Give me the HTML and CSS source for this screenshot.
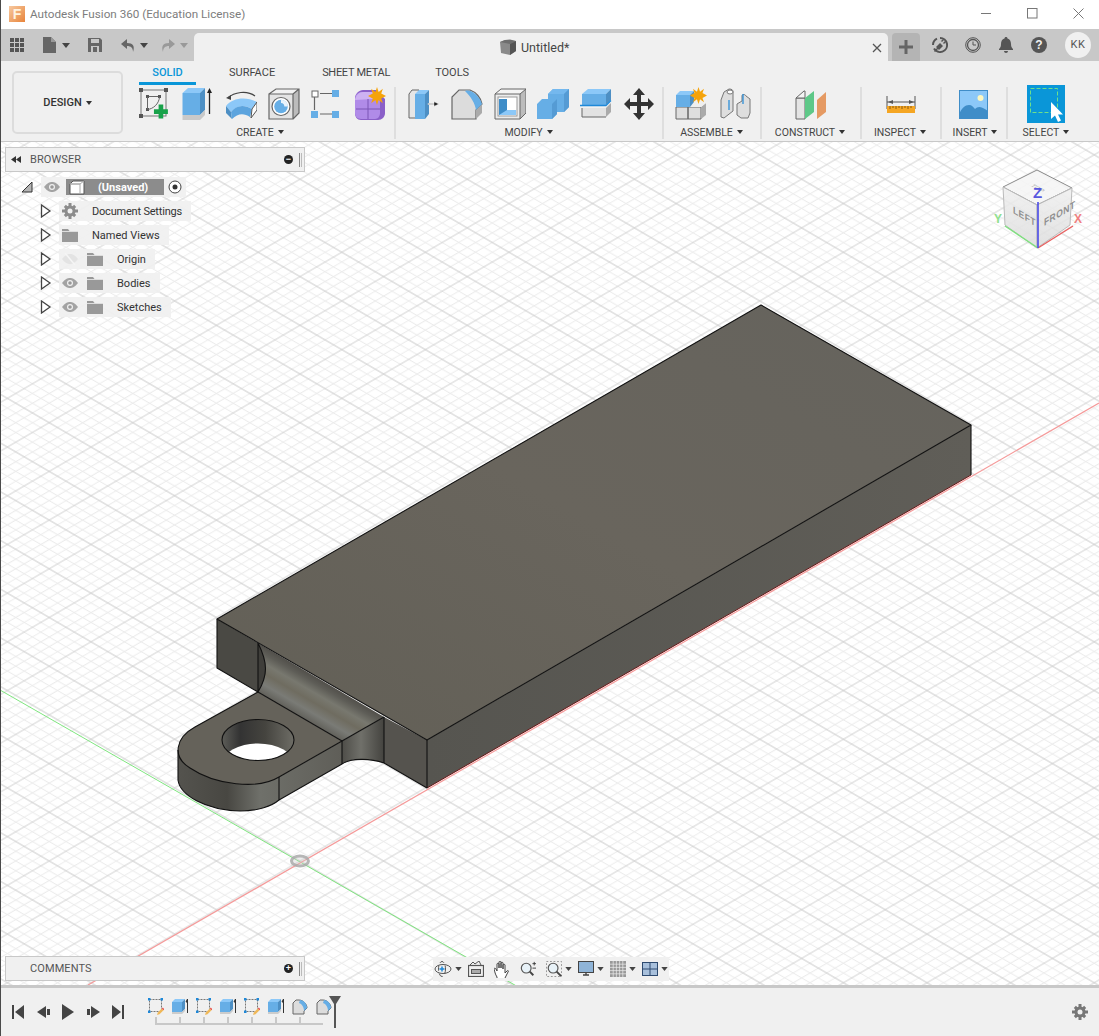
FILE: index.html
```html
<!DOCTYPE html>
<html lang="en">
<head>
<meta charset="utf-8">
<title>Autodesk Fusion 360</title>
<link rel="stylesheet" href="styles.css">
</head>
<body>
<svg class="defs" width="0" height="0" aria-hidden="true">
  <defs>
    <symbol id="i-folder" viewBox="0 0 16 14"><path d="M0 1h6l1.500 2H16v11H0z" fill="#999"/><path d="M0 3.500h16" stroke="#f0f0f0" stroke-width=".8"/></symbol>
    <symbol id="i-eye" viewBox="0 0 16 10"><path d="M0 5C3 1 5.500 0 8 0s5 1 8 5c-3 4-5.500 5-8 5S3 9 0 5z" fill="#a3a3a3"/><circle cx="8" cy="5" r="3" fill="#f0f0f0"/><circle cx="8" cy="5" r="1.800" fill="#999"/></symbol>
    <symbol id="i-arrow" viewBox="0 0 12 14"><path d="M1.500 1 10 7l-8.500 6z" fill="#fff" stroke="#444" stroke-width="1.300"/></symbol>
    <symbol id="t-sketch" viewBox="0 0 16 18"><rect x="1.500" y="1.500" width="12" height="12" fill="none" stroke="#777" stroke-dasharray="2 1"/><g fill="#1e88d8"><rect x="0" y="0" width="2.500" height="2.500"/><rect x="12.500" y="0" width="2.500" height="2.500"/><rect x="0" y="12.500" width="2.500" height="2.500"/></g><path d="M9 17l.8-2.500 4-4 1.700 1.700-4 4z" fill="#f0b858"/><path d="M13.800 10.500l1-1 1.700 1.700-1 1z" fill="#e85050"/></symbol>
    <symbol id="t-extrude" viewBox="0 0 16 18"><path d="M0 4h10v10H0z" fill="#66aee6"/><path d="M0 4l3-3h10l-3 3z" fill="#8cc8f8"/><path d="M10 4l3-3v10l-3 3z" fill="#4d8fc4"/><path d="M0 14h10l3-3v2l-3 3H0z" fill="#ccc"/><path d="M15.500 1v14M14 4l1.500-3L17 4z" stroke="#333" fill="#333"/></symbol>
    <symbol id="t-fillet" viewBox="0 0 16 18"><path d="M1 16V5l3-3h3c4 0 8 4 8 8l-3 3v3z" fill="#dcdcdc" stroke="#666"/><path d="M8 2c4 0 7 4 7 8l-3 3c0-4-2-7-5-8z" fill="#66aee6"/></symbol>
    <symbol id="i-star" viewBox="0 0 20 20"><path d="M10 0l1.800 5.500L16.500 2l-1.800 5.200L20 10l-5.300 2.800 1.800 5.200-4.700-3.500L10 20l-1.800-5.500L3.500 18l1.800-5.200L0 10l5.300-2.800L3.500 2l4.700 3.500z" fill="#f5a30a"/></symbol>
    <symbol id="i-caret" viewBox="0 0 8 5"><path d="M0 0h8L4 5z" fill="#444"/></symbol>
    <pattern id="grid" width="100" height="100" patternUnits="userSpaceOnUse" patternTransform="matrix(.418 -.2435 .418 .2435 300 861)">
      <path d="M20 0V100M40 0V100M60 0V100M80 0V100M0 20H100M0 40H100M0 60H100M0 80H100" stroke="#ececec" stroke-width="2.300" fill="none"/>
      <path d="M0 0V100M100 0V100M0 0H100M0 100H100" stroke="#cfcfcf" stroke-width="2.400" fill="none"/>
    </pattern>
    <linearGradient id="g-top" x1="0" y1="1" x2="1" y2="0"><stop offset="0" stop-color="#625f56"/><stop offset=".5" stop-color="#69655d"/><stop offset="1" stop-color="#65635d"/></linearGradient>
    <linearGradient id="g-side" x1="0" y1="0" x2="1" y2="0"><stop offset="0" stop-color="#565550"/><stop offset="1" stop-color="#605e58"/></linearGradient>
    <linearGradient id="g-fillet" gradientUnits="userSpaceOnUse" x1="300" y1="668" x2="279" y2="704"><stop offset="0" stop-color="#52504b"/><stop offset=".14" stop-color="#5e5d57"/><stop offset=".34" stop-color="#78786f"/><stop offset=".55" stop-color="#6f6c60"/><stop offset=".78" stop-color="#7a7b76"/><stop offset="1" stop-color="#62615b"/></linearGradient>
    <linearGradient id="g-tabside" x1="0" y1="0" x2="1" y2="0"><stop offset="0" stop-color="#54534e"/><stop offset=".3" stop-color="#484742"/><stop offset=".5" stop-color="#6f706a"/><stop offset="1" stop-color="#5f5e58"/></linearGradient>
    <linearGradient id="g-notch" x1="0" y1="0" x2="1" y2="0"><stop offset="0" stop-color="#4e4d48"/><stop offset=".45" stop-color="#70706a"/><stop offset="1" stop-color="#44433f"/></linearGradient>
    <linearGradient id="g-hole" x1="0" y1="0" x2="1" y2="0"><stop offset="0" stop-color="#5d5d58"/><stop offset=".25" stop-color="#333"/><stop offset=".6" stop-color="#45443f"/><stop offset="1" stop-color="#6e6d66"/></linearGradient>
    <linearGradient id="g-cube" x1="0" y1="0" x2="0" y2="1"><stop offset="0" stop-color="#efefef" stop-opacity=".85"/><stop offset="1" stop-color="#dcdcdc" stop-opacity=".85"/></linearGradient>
    <clipPath id="hole-clip"><ellipse cx="258" cy="740" rx="36" ry="20.500"/></clipPath>
  </defs>
</svg>

<div class="app">
  <header class="titlebar">
    <span class="logo"><span class="logo-f">F</span></span>
    <span class="title">Autodesk Fusion 360 (Education License)</span>
    <div class="winctl">
      <svg width="11" height="11" viewBox="0 0 11 11"><path d="M0 5.500h10" stroke="#777"/></svg>
      <svg width="11" height="11" viewBox="0 0 11 11"><rect x=".5" y=".5" width="9.500" height="9.500" fill="none" stroke="#777"/></svg>
      <svg width="11" height="11" viewBox="0 0 11 11"><path d="M.5.500l10 10M10.500.500l-10 10" stroke="#777"/></svg>
    </div>
  </header>

  <div class="tabbar">
    <div class="quick">
      <svg class="q-grid" width="14" height="14" viewBox="0 0 14 14" fill="#555"><rect width="4" height="4"/><rect x="5" width="4" height="4"/><rect x="10" width="4" height="4"/><rect y="5" width="4" height="4"/><rect x="5" y="5" width="4" height="4"/><rect x="10" y="5" width="4" height="4"/><rect y="10" width="4" height="4"/><rect x="5" y="10" width="4" height="4"/><rect x="10" y="10" width="4" height="4"/></svg>
      <svg class="q-doc" width="14" height="16" viewBox="0 0 14 16"><path d="M0 0h8l5 5v11H0z" fill="#666"/><path d="M8 0v5h5" fill="#999"/></svg>
      <svg class="q-caret" width="8" height="5"><use href="#i-caret"/></svg>
      <svg class="q-save" width="14" height="14" viewBox="0 0 14 14"><path d="M0 0h12l2 2v12H0z" fill="#666"/><rect x="3" y="1" width="8" height="4" fill="#c8c8c8"/><rect x="3" y="8" width="8" height="6" fill="#c8c8c8"/><rect x="5" y="9" width="4" height="5" fill="#666"/></svg>
      <svg class="q-undo" width="14" height="13" viewBox="0 0 14 13"><path d="M6 0 0 5l6 5V7c4 0 6 2 6 6 2-6 0-9-6-9z" fill="#666"/></svg>
      <svg class="q-caret2" width="8" height="5"><use href="#i-caret"/></svg>
      <svg class="q-redo" width="14" height="13" viewBox="0 0 14 13"><path d="M8 0l6 5-6 5V7c-4 0-6 2-6 6C0 7 2 4 8 4z" fill="#999"/></svg>
      <svg class="q-caret3" width="8" height="5"><path d="M0 0h8L4 5z" fill="#999"/></svg>
    </div>
    <div class="doctab">
      <svg class="cube" width="16" height="16" viewBox="0 0 16 16"><path d="M0 3l5-2 11 1v10l-6 4-9-2z" fill="#8a8a8a"/><path d="M0 3l10 2 6-3-6-1.500-5 .5z" fill="#6e6e6e"/><path d="M10 5v11l6-4V2z" fill="#555"/></svg>
      <span class="docname">Untitled*</span>
      <svg class="tabclose" width="10" height="10" viewBox="0 0 10 10"><path d="M1 1l8 8M9 1l-8 8" stroke="#555" stroke-width="1.300"/></svg>
    </div>
    <div class="plus"><svg width="14" height="14" viewBox="0 0 14 14"><path d="M5.500 0h3v5.500H14v3H8.500V14h-3V8.500H0v-3h5.500z" fill="#666"/></svg></div>
    <div class="status">
      <svg width="16" height="16" viewBox="0 0 16 16"><path d="M8 1a7 7 0 1 1-6 10.500" fill="none" stroke="#555" stroke-width="2"/><path d="M1 8a7 7 0 0 1 4-6.300" fill="none" stroke="#555" stroke-width="2"/><path d="M2 14l3-3-1-1 4-4 3 3-4 4-1-1-3 3zM9 4l2-2 1 1-2 2zM11 6l2-2 1 1-2 2z" fill="#555"/></svg>
      <svg width="16" height="16" viewBox="0 0 16 16"><circle cx="8" cy="8" r="7.300" fill="none" stroke="#555"/><circle cx="8" cy="8" r="5.500" fill="none" stroke="#555" stroke-width="1.300"/><path d="M8 4.500V8h3" fill="none" stroke="#555"/></svg>
      <svg width="16" height="16" viewBox="-1 0 16 16"><path d="M7 0c1 0 1.500.7 1.500 1.500C11 2.300 12 4.500 12 7c0 3 1 4 2 5v1H0v-1c1-1 2-2 2-5 0-2.500 1-4.700 3.500-5.500C5.500.7 6 0 7 0z" fill="#555"/><path d="M5 14h4c0 1-1 2-2 2s-2-1-2-2z" fill="#555"/></svg>
      <span class="help">?</span>
    </div>
    <span class="avatar">KK</span>
  </div>

  <nav class="ribbon">
    <div class="design">DESIGN<span class="caret"></span></div>
    <div class="tools">
      <div class="tabs">
        <span class="rtab active">SOLID</span>
        <span class="rtab surface">SURFACE</span>
        <span class="rtab sheet">SHEET METAL</span>
        <span class="rtab toolstab">TOOLS</span>
      </div>
      <div class="groups">
        <section class="group g-create">
          <div class="icons">
            <svg class="ic" viewBox="0 0 32 34"><rect x="2" y="3" width="25" height="26" fill="none" stroke="#777"/><g fill="#555"><rect y="1" width="4" height="4"/><rect x="25" y="1" width="4" height="4"/><rect y="27" width="4" height="4"/><rect x="7" y="8" width="3" height="3"/><rect x="19" y="8" width="3" height="3"/><rect x="7" y="21" width="3" height="3"/></g><path d="M8.500 10v12M10 9.500h9M8.500 22.500C14 22 20 17 20.500 10" fill="none" stroke="#666"/><path d="M20 20h5v5h5v5h-5v5h-5v-5h-5v-5h5z" fill="#18a24a" transform="translate(1 -1) scale(.93)"/></svg>
            <svg class="ic" viewBox="0 0 32 34"><path d="M.5 6H18v22H.5z" fill="#66aee6"/><path d="M.5 6 6 1h17l-5 5z" fill="#8cc8f8"/><path d="M18 6l5-5v22l-5 5z" fill="#4d8fc4"/><path d="M.5 28H18l5-5v5l-5 5H.5z" fill="#c9c9c9"/><path d="M27.500 4v23" stroke="#222" stroke-width="1.300"/><path d="M25 6l2.500-5L30 6z" fill="#222"/></svg>
            <svg class="ic" viewBox="0 0 32 34"><path d="M1 19C7 11 21 9 32 15l-5 7C19 17 12 18 6 25z" fill="#8cc8f8"/><path d="M1 19l5 6 1 7-6-6z" fill="#4d8fc4"/><path d="M6 25c5-7 13-8 21-3l-2 8C19 26 13 26 7 32z" fill="#5ca4de"/><path d="M27 22l5-7v8l-6 8z" fill="#fff" stroke="#555"/><path d="M3 11C9 5 22 3 30 9" fill="none" stroke="#444" stroke-width="1.200"/><path d="M1 11l5-3 0 5z" fill="#444"/></svg>
            <svg class="ic" viewBox="0 0 32 34"><path d="M1 7h24v25H1z" fill="#e4e4e4"/><path d="M1 7l7-5h23l-6 5z" fill="#f2f2f2"/><path d="M25 7l6-5v24l-6 6z" fill="#bcbcbc"/><path d="M1 7h24v25H1zM1 7l7-5h23v24l-6 6M25 7l6-5" fill="none" stroke="#666" stroke-width="1.200"/><circle cx="13" cy="19.500" r="9" fill="#fff" stroke="#666" stroke-width="1.200"/><circle cx="13" cy="19.500" r="6.800" fill="#66aee6"/><path d="M13 12.700a6.800 6.800 0 0 1 6.800 6.800l-3.500 0a3.500 3.500 0 0 0-3.300-3.500z" fill="#fff" opacity=".85"/></svg>
            <svg class="ic" viewBox="0 0 32 34"><path d="M9 6.500h12M3.500 10v13M9 27h12" stroke="#666" stroke-width="1.200"/><rect x="1" y="4" width="6" height="6" fill="#fff" stroke="#666"/><rect x="21" y="3" width="7" height="7" fill="#66aee6"/><rect x="0" y="24" width="7" height="7" fill="#66aee6"/><rect x="21" y="24" width="7" height="7" fill="#66aee6"/></svg>
            <svg class="ic" viewBox="0 0 32 34"><path d="M1 11C1 7 5 3 9 3h13l9 9v14c0 4-3 7-7 7H7c-4 0-6-3-6-7z" fill="#8a5fc8"/><path d="M1 12C1 8 4 5 8 5h16c2 2 2 4 2 6v15c0 3-2 6-5 6H7c-4 0-6-3-6-6z" fill="#b08be8"/><path d="M1 13C2 8 5 5 9 5h12l-2 7z" fill="#cdb2f2"/><path d="M2 22h24M14 12v20" stroke="#7a55b5"/><svg x="14" y="0" width="18" height="18" viewBox="0 0 20 20"><use href="#i-star" width="20" height="20"/></svg></svg>
          </div>
          <div class="glabel l-create">CREATE<span class="caret"></span></div>
        </section>
        <section class="group g-modify">
          <div class="icons">
            <svg class="ic" viewBox="0 0 32 34"><path d="M1 7l3-4h7v28H1z" fill="#e6e6e6" stroke="#666"/><path d="M7 7h10v25H7z" fill="#66aee6"/><path d="M7 7l4-4h10l-4 4z" fill="#8cc8f8"/><path d="M17 7l4-4v24l-4 5z" fill="#4d8fc4"/><path d="M20 16.500h6v-2l5 2.500-5 2.500v-2h-6z" fill="#222" stroke="#fff" stroke-width=".6"/></svg>
            <svg class="ic" viewBox="0 0 32 34"><path d="M1 32V10l7-7h11c6 2 11 8 12 14l-6 6v9z" fill="#dcdcdc" stroke="#666" stroke-width="1.200"/><path d="M25 23l6-6v9l-6 6z" fill="#aaa"/><path d="M14 4c6-2 14 4 17 13l-6 6c-1-7-5-13-11-19z" fill="#66aee6"/></svg>
            <svg class="ic" viewBox="0 0 32 34"><path d="M1 7h25v25H1z" fill="#ececec"/><path d="M1 7l6-5h25l-6 5z" fill="#f4f4f4"/><path d="M26 7l6-5v24l-6 6z" fill="#bcbcbc"/><path d="M1 7h25v25H1zM1 7l6-5h25v24l-6 6M26 7l6-5" fill="none" stroke="#666"/><rect x="4" y="10" width="19" height="19" fill="#fff" stroke="#999"/><path d="M5 12h8v11h9v5H5z" fill="#8cc8f8"/><path d="M5 12h8v11l-8 5z" fill="#3f8dc8"/></svg>
            <svg class="ic" viewBox="0 0 32 34"><path d="M0 17l5-5h6V7l5-5h16v18l-5 5h-7v2l-5 5H0z" fill="#66aee6"/><path d="M11 7l5-5h16l-5 5z" fill="#74b8ee"/><path d="M27 7l5-5v18l-5 5z" fill="#559bd4"/><path d="M15 17l5-5v15l-5 5z" fill="#559bd4"/></svg>
            <svg class="ic" viewBox="0 0 32 34"><path d="M2 7h24v11H2z" fill="#66aee6"/><path d="M2 7l6-5h23l-5 5z" fill="#8cc8f8"/><path d="M26 7l5-5v11l-5 5z" fill="#4d8fc4"/><path d="M0 18.500h26l5-5" fill="none" stroke="#1e88d8" stroke-width="1.300"/><path d="M2 21h24v9H2z" fill="#e2e2e2"/><path d="M26 21l5-5v9l-5 5z" fill="#aaa"/><path d="M2 30h24" stroke="#666"/><path d="M2 21v9" stroke="#666"/></svg>
            <svg class="ic" viewBox="0 0 32 34"><path d="M16 1l6 7h-4v7h7v-4l6 6-6 6v-4h-7v7h4l-6 7-6-7h4v-7H7v4l-6-6 6-6v4h7V8h-4z" fill="#333"/></svg>
          </div>
          <div class="glabel l-modify">MODIFY<span class="caret"></span></div>
        </section>
        <section class="group g-assemble">
          <div class="icons">
            <svg class="ic" viewBox="0 0 32 34"><path d="M1 20h12v12H1zM13 20h13v12H13z" fill="#dedede" stroke="#666"/><path d="M26 20l5-4v12l-5 4z" fill="#aaa"/><path d="M13 20l3-4h15l-5 4z" fill="#efefef"/><path d="M1 8h14v12H1z" fill="#66aee6"/><path d="M1 8l4-4h14l-4 4z" fill="#8cc8f8"/><path d="M15 8l4-4v11l-4 5z" fill="#4d8fc4"/><svg x="15" y="0" width="17" height="17" viewBox="0 0 20 20"><use href="#i-star" width="20" height="20"/></svg></svg>
            <svg class="ic" viewBox="0 0 32 34"><path d="M1 13l3-8 5-3c3 0 4 1 4 3v19l-9 7-3-1z" fill="#dedede" stroke="#777"/><path d="M17 17l5-3V9c0-2 3-2 4 0l4 3v14l-2 5h-7l-4-3z" fill="#dedede" stroke="#777"/><path d="M9 13v10M23 7v10" stroke="#1e88d8" stroke-width="1.200"/><ellipse cx="10" cy="5" rx="3" ry="2" fill="#fff" stroke="#777"/></svg>
          </div>
          <div class="glabel l-assemble">ASSEMBLE<span class="caret"></span></div>
        </section>
        <section class="group g-construct">
          <div class="icons">
            <svg class="ic wide" viewBox="0 0 32 34"><path d="M1 11h9v21H1z" fill="#e4e4e4" stroke="#666"/><path d="M1 11l8-7h1v7z" fill="#f4f4f4" stroke="#666"/><path d="M10 11l9-7v21l-9 7z" fill="#5ec888"/><path d="M22 13l9-8v20l-9 7z" fill="#e59a63"/></svg>
          </div>
          <div class="glabel l-construct">CONSTRUCT<span class="caret"></span></div>
        </section>
        <section class="group g-inspect">
          <div class="icons">
            <svg class="ic" viewBox="0 0 32 34"><path d="M2 9v13M30 9v13M2 15h28" stroke="#555"/><path d="M3 15l5-2v4zM29 15l-5-2v4z" fill="#555"/><rect x="2" y="19" width="28" height="7" fill="#f5a623"/><path d="M5 19v3M8 19v2M11 19v3M14 19v2M17 19v3M20 19v2M23 19v3M26 19v2" stroke="#8a5a10"/></svg>
          </div>
          <div class="glabel l-inspect">INSPECT<span class="caret"></span></div>
        </section>
        <section class="group g-insert">
          <div class="icons">
            <svg class="ic" viewBox="0 0 32 34"><rect x="1" y="3" width="29" height="29" fill="#8cc8f8"/><path d="M1 27c3-6 6-9 10-9 3 0 4 2 6 4 3-3 6-3 13 2v8H1z" fill="#3f8dc8"/><rect x="1.500" y="3.500" width="28" height="28" fill="none" stroke="#3f8dc8"/><circle cx="22.500" cy="11" r="3" fill="#fdf7c0"/></svg>
          </div>
          <div class="glabel l-insert">INSERT<span class="caret"></span></div>
        </section>
        <section class="group g-select">
          <div class="icons">
            <svg class="ic sel" viewBox="0 0 38 38"><rect width="38" height="38" fill="#0a96d8"/><rect x="3.500" y="3.500" width="27" height="24" fill="none" stroke="#6fe08a" stroke-dasharray="4 2"/><path d="M24 17v17l4-3.500 3 6.500 3-1.500-3-6h5z" fill="#fff"/></svg>
          </div>
          <div class="glabel">SELECT<span class="caret"></span></div>
        </section>
      </div>
    </div>
  </nav>

  <main class="canvas">
    <svg class="scene" viewBox="1 142 1098 843" preserveAspectRatio="none">
      <rect x="0" y="142" width="1099" height="843" fill="#fff"/>
      <rect x="0" y="142" width="1099" height="843" fill="url(#grid)"/>
      <path d="M0 690 520 988" stroke="#7fe67f" stroke-width="1"/>
      <path d="M88 985 1099 403" stroke="#f59a9a" stroke-width="1.200"/>
      <ellipse cx="300" cy="861" rx="8.500" ry="5" fill="#ccc" fill-opacity=".4" stroke="#aaa" stroke-width="3" opacity=".85"/>

      <!-- part -->
      <path d="M217 619 761 305 971 425 427 740z" fill="url(#g-top)"/>
      <path d="M427 740 971 425V475L427 788z" fill="url(#g-side)"/>
      <path d="M427 788 971 475" stroke="#6a1414" stroke-width="1"/>
      <path d="M217 619 258 643V692L217 668z" fill="#4a4944"/>
      <path d="M258 643 384 717 342 741 258 692z" fill="url(#g-fillet)"/>
      <path d="M258 643C268 663 268 675 258 692z" fill="#3f3e3a"/>
      <path d="M342 741 384 717V763C372 759 352 757 342 764z" fill="url(#g-notch)"/>
      <path d="M384 717 427 740V788L384 763z" fill="#55534e"/>
      <path d="M178 750V780C180 795 205 810 240 811 258 811 272 806 279 800L342 764V741L279 777 190 768z" fill="url(#g-tabside)"/>
      <path d="M258 692 342 741 279 777C258 790 215 785 190 768 172 757 175 738 195 727z" fill="#65625a"/>
      <ellipse cx="258" cy="740" rx="36" ry="20.500" fill="url(#g-hole)"/>
      <g clip-path="url(#hole-clip)"><ellipse cx="258" cy="764" rx="36" ry="20.500" fill="#fff"/></g>
      <g fill="none" stroke="#111" stroke-width="1.100" stroke-linejoin="round">
        <path d="M217 619 761 305 971 425 427 740z"/>
        <path d="M971 425V475M427 740V788M217 619V668L258 692M258 643V692M258 643C268 663 268 675 258 692"/>
        <path d="M258 692 195 727C175 738 172 757 190 768 215 785 258 790 279 777L342 741 384 717"/>
        <path d="M258 692 342 741M342 741V764M384 717V763M384 763 427 788M342 764C352 757 372 759 384 763"/>
        <path d="M279 777V800M279 800 342 764M178 750V780C180 795 205 810 240 811 258 811 272 806 279 800"/>
        <ellipse cx="258" cy="740" rx="36" ry="20.500"/>
      </g>

      <!-- view cube -->
      <g class="viewcube">
        <path d="M1003 187 1037 170 1072 188 1037 205z" fill="#f4f4f4" fill-opacity=".85" stroke="#8a8a8a"/>
        <path d="M1003 187 1037 205V248L1005 225z" fill="url(#g-cube)" stroke="#bbb"/>
        <path d="M1072 188 1037 205V248L1070 225z" fill="url(#g-cube)" stroke="#bbb"/>
        <text class="vc-face" transform="matrix(.85 .5 0 1 1013 213)">LEFT</text>
        <text class="vc-face" transform="matrix(.85 -.5 0 1 1044 226)">FRONT</text>
        <text class="vc-top" transform="matrix(.7 .4 -.7 .4 1030 186)">TOP</text>
        <path d="M1038 248 1005 226" stroke="#7fe07f" stroke-width="1.400"/>
        <path d="M1038 248 1073 226" stroke="#e86060" stroke-width="1.400"/>
        <path d="M1038 248V202" stroke="#4a4ae8" stroke-width="1.600"/>
        <text class="vc-z" x="1033" y="197.500">Z</text>
        <text class="vc-y" x="994" y="223">Y</text>
        <text class="vc-x" x="1074" y="223">X</text>
      </g>
    </svg>

    <aside class="panel browser">
      <svg class="collapse" width="10" height="7" viewBox="0 0 10 7" fill="#333"><path d="M5 0v7L0 3.500zM10 0v7L5 3.500z"/></svg>
      <span class="ptitle">BROWSER</span>
      <span class="pbtn">−</span>
      <span class="grip"></span>
    </aside>

    <div class="tree">
      <div class="row row-root">
        <svg class="tw" width="12" height="12" viewBox="0 0 12 12"><path d="M11 1v10H1z" fill="#b5b5b5" stroke="#333"/></svg>
        <div class="pill">
          <svg class="eye" width="16" height="10"><use href="#i-eye"/></svg>
          <div class="rootname">
            <svg width="16" height="15" viewBox="0 0 16 15"><path d="M1 4l3-3h11v13H1z" fill="#fff" stroke="#555"/><path d="M1 4h10v10" fill="none" stroke="#aaa"/><path d="M1 4h10l4-3" fill="none" stroke="#aaa"/></svg>
            <span>(Unsaved)</span>
          </div>
          <svg width="14" height="14" viewBox="0 0 14 14"><circle cx="7" cy="7" r="6" fill="#fff" stroke="#444"/><circle cx="7" cy="7" r="2.500" fill="#333"/></svg>
        </div>
      </div>
      <div class="row">
        <svg class="tw" width="12" height="14"><use href="#i-arrow"/></svg>
        <div class="pill">
          <svg class="gear" width="16" height="16" viewBox="0 0 16 16"><g fill="#8c8c8c"><circle cx="8" cy="8" r="5.500"/><path d="M6.500 0h3v16h-3zM0 6.500h16v3H0z"/><path d="M1.800 3.900 3.900 1.800l10.300 10.300-2.100 2.100zM14.200 3.900 12.100 1.800 1.800 12.100l2.100 2.100z"/></g><circle cx="8" cy="8" r="2.500" fill="#f0f0f0"/></svg>
          <span class="label doc-label">Document Settings</span>
        </div>
      </div>
      <div class="row">
        <svg class="tw" width="12" height="14"><use href="#i-arrow"/></svg>
        <div class="pill">
          <svg class="folder" width="16" height="14"><use href="#i-folder"/></svg>
          <span class="label">Named Views</span>
        </div>
      </div>
      <div class="row">
        <svg class="tw" width="12" height="14"><use href="#i-arrow"/></svg>
        <div class="pill">
          <svg class="eye off" width="16" height="12" viewBox="0 0 16 12"><path d="M0 6C3 2 5.500 1 8 1s5 1 8 5c-3 4-5.500 5-8 5S3 10 0 6z" fill="#e3e3e3"/><path d="M3 0l10 12" stroke="#f5f5f5" stroke-width="1.500"/></svg>
          <svg class="folder" width="16" height="14"><use href="#i-folder"/></svg>
          <span class="label">Origin</span>
        </div>
      </div>
      <div class="row">
        <svg class="tw" width="12" height="14"><use href="#i-arrow"/></svg>
        <div class="pill">
          <svg class="eye" width="16" height="10"><use href="#i-eye"/></svg>
          <svg class="folder" width="16" height="14"><use href="#i-folder"/></svg>
          <span class="label">Bodies</span>
        </div>
      </div>
      <div class="row">
        <svg class="tw" width="12" height="14"><use href="#i-arrow"/></svg>
        <div class="pill">
          <svg class="eye" width="16" height="10"><use href="#i-eye"/></svg>
          <svg class="folder" width="16" height="14"><use href="#i-folder"/></svg>
          <span class="label">Sketches</span>
        </div>
      </div>
    </div>

    <aside class="panel comments">
      <span class="ptitle">COMMENTS</span>
      <span class="pbtn">+</span>
      <span class="grip"></span>
    </aside>

    <div class="navbar">
      <svg width="18" height="18" viewBox="0 0 18 18"><ellipse cx="9" cy="9" rx="8" ry="4.500" fill="none" stroke="#555"/><ellipse cx="8" cy="9" rx="3.500" ry="7.500" fill="none" stroke="#555" stroke-dasharray="5 3"/><path d="M8 6.500v5M5.500 9h5" stroke="#1e88d8" stroke-width="1.500"/></svg>
      <svg class="ncaret" width="7" height="4"><use href="#i-caret"/></svg>
      <svg class="nsp" width="16" height="16" viewBox="0 0 16 16"><rect x=".5" y="4.500" width="15" height="11" fill="#eee" stroke="#555" stroke-width="1.200"/><rect x="3.500" y="8.500" width="9" height="4" fill="#aaa" stroke="#555"/><path d="M2 4l3-3 2 2 4-3 2 4" fill="none" stroke="#555"/></svg>
      <svg class="nsp2" width="16" height="17" viewBox="0 0 16 17"><path d="M3 16C1 13 1 11 0 8c0-1 1-1 2 0l1 2V3c0-1 2-1 2 0v4-6c0-1 2-1 2 0v6-5c0-1 2-1 2 0v6-4c0-1 2-1 2 0v8l2-2c1-1 2 0 1 1l-3 6c-1 1-1 1-2 1H5c-1 0-1 0-2-1z" fill="#fff" stroke="#444"/></svg>
      <svg class="nsp2" width="16" height="16" viewBox="0 0 18 18"><circle cx="7" cy="8" r="5.500" fill="#e8f2f8" stroke="#555" stroke-width="1.300"/><path d="M11 12l4 4" stroke="#444" stroke-width="2.200"/><path d="M14 3h4M16 1v4M14 8h4" stroke="#333"/></svg>
      <svg class="nsp2" width="16" height="16" viewBox="0 0 18 18"><rect x=".5" y=".5" width="17" height="17" fill="none" stroke="#888" stroke-dasharray="2 2"/><circle cx="8" cy="8" r="5.500" fill="#e8f2f8" stroke="#555" stroke-width="1.300"/><path d="M12 12l5 5" stroke="#444" stroke-width="2.200"/></svg>
      <svg class="ncaret" width="7" height="4"><use href="#i-caret"/></svg>
      <svg class="nsp3" width="16" height="16" viewBox="0 0 16 16"><rect x=".5" y=".5" width="15" height="11" fill="#8fb4d8" stroke="#444"/><path d="M5 14h6M8 12v2" stroke="#444" stroke-width="1.400"/></svg>
      <svg class="ncaret" width="7" height="4"><use href="#i-caret"/></svg>
      <svg class="nsp3" width="16" height="16" viewBox="0 0 16 16"><rect width="16" height="16" fill="#999"/><path d="M3.200 0v16M6.400 0v16M9.600 0v16M12.800 0v16M0 3.200h16M0 6.400h16M0 9.600h16M0 12.800h16" stroke="#eee" stroke-width=".7"/></svg>
      <svg class="ncaret" width="7" height="4"><use href="#i-caret"/></svg>
      <svg class="nsp3" width="16" height="14" viewBox="0 0 16 14"><rect x=".5" y=".5" width="15" height="13" fill="#a8c0dc" stroke="#2e4a70"/><path d="M8 0v14M0 7h16" stroke="#2e4a70"/></svg>
      <svg class="ncaret" width="7" height="4"><use href="#i-caret"/></svg>
    </div>
  </main>

  <footer class="timeline">
    <div class="playback">
      <svg width="12" height="14" viewBox="0 0 12 14" fill="#444"><rect width="2" height="14"/><path d="M12 0v14L3 7z"/></svg>
      <svg width="13" height="12" viewBox="0 0 13 12" fill="#444"><path d="M9 0v12L0 6z"/><rect x="10" y="3" width="3" height="6"/></svg>
      <svg width="12" height="16" viewBox="0 0 12 16" fill="#444"><path d="M0 0l12 8-12 8z"/></svg>
      <svg width="13" height="12" viewBox="0 0 13 12" fill="#444"><path d="M4 0v12l9-6z"/><rect y="3" width="3" height="6"/></svg>
      <svg width="12" height="14" viewBox="0 0 12 14" fill="#444"><path d="M0 0v14l9-7z"/><rect x="10" width="2" height="14"/></svg>
    </div>
    <div class="history">
      <div class="steps">
        <svg class="step" viewBox="0 0 16 18"><use href="#t-sketch"/></svg>
        <svg class="step" viewBox="0 0 16 18"><use href="#t-extrude"/></svg>
        <svg class="step" viewBox="0 0 16 18"><use href="#t-sketch"/></svg>
        <svg class="step" viewBox="0 0 16 18"><use href="#t-extrude"/></svg>
        <svg class="step" viewBox="0 0 16 18"><use href="#t-sketch"/></svg>
        <svg class="step" viewBox="0 0 16 18"><use href="#t-extrude"/></svg>
        <svg class="step" viewBox="0 0 16 18"><use href="#t-fillet"/></svg>
        <svg class="step" viewBox="0 0 16 18"><use href="#t-fillet"/></svg>
      </div>
      <div class="bracket">
        <i></i><i></i><i></i><i></i><i></i><i></i><i></i>
      </div>
    </div>
    <svg class="marker" width="12" height="32" viewBox="0 0 12 32"><path d="M0 0h12L7 8v24H5V8z" fill="#555"/></svg>
    <svg class="tlgear" width="16" height="16" viewBox="0 0 16 16"><g fill="#777"><circle cx="8" cy="8" r="5.500"/><path d="M6.500 0h3v16h-3zM0 6.500h16v3H0z"/><path d="M1.800 3.900 3.900 1.800l10.300 10.300-2.100 2.100zM14.200 3.900 12.100 1.800 1.800 12.100l2.100 2.100z"/></g><circle cx="8" cy="8" r="2.500" fill="#f0f0f0"/></svg>
  </footer>
</div>
</body>
</html>
```

FILE: styles.css
```css
* { box-sizing: border-box; }
html, body { margin: 0; padding: 0; }
body { font-family: Roboto, "Noto Sans", sans-serif; color: #3c3c3c; background: #fff; overflow: hidden; }
.defs { position: absolute; }
svg { display: block; flex: none; }

.app { width: 1099px; height: 1036px; display: flex; flex-direction: column; border-left: 1px solid #4a4a4a; }

/* title bar */
.titlebar { height: 29px; display: flex; align-items: center; background: #fff; padding: 0 15px 2px 8px; }
.logo { width: 16px; height: 16px; background: linear-gradient(135deg, #f7c9a0, #e8843a); display: flex; align-items: center; justify-content: center; margin-right: 5px; }
.logo-f { font: bold 14px "Liberation Sans", sans-serif; color: #fff3e0; line-height: 1; }
.title { font-size: 11.700px; color: #7d7d7d; }
.winctl { margin-left: auto; display: flex; gap: 35px; }

/* tab bar */
.tabbar { height: 32px; background: #c8c8c8; display: flex; align-items: flex-end; }
.quick { width: 193px; height: 32px; position: relative; display: flex; align-items: center; padding: 0 0 0 9px; }
.q-grid { margin-right: 19px; }
.q-doc { margin-right: 5px; }
.q-caret { margin-right: 18px; }
.q-save { margin-right: 19px; }
.q-undo { margin-right: 5px; }
.q-caret2 { margin-right: 13px; }
.q-redo { margin-right: 5px; }
.doctab { width: 694px; height: 28px; background: #f0f0f0; border-radius: 5px 5px 0 0; display: flex; align-items: center; padding-left: 306px; position: relative; }
.docname { font-size: 12.500px; margin-left: 5px; color: #444; }
.tabclose { position: absolute; right: 6px; top: 10px; }
.plus { width: 28px; height: 28px; background: #b4b4b4; border-radius: 4px 4px 0 0; margin-left: 4px; display: flex; align-items: center; justify-content: center; }
.status { display: flex; align-items: center; height: 32px; gap: 17px; margin-left: 12px; }
.help { width: 16px; height: 16px; border-radius: 50%; background: #555; color: #f0f0f0; font: bold 12px/16px "Liberation Sans", sans-serif; text-align: center; }
.avatar { width: 26px; height: 26px; border-radius: 50%; background: #f0f0f0; font-size: 11px; line-height: 26px; text-align: center; margin: 0 0 3px 18px; color: #555; letter-spacing: .5px; }

/* ribbon */
.ribbon { height: 81px; background: #f0f0f0; border-bottom: 1px solid #c8c8c8; display: flex; }
.design { width: 111px; height: 63px; margin: 10px 16px 0 11px; border: 2px solid #dcdcdc; border-radius: 5px; display: flex; align-items: center; justify-content: center; font-size: 11px; font-weight: 500; color: #333; }
.caret { display: inline-block; width: 0; height: 0; border-left: 3.500px solid transparent; border-right: 3.500px solid transparent; border-top: 4px solid #333; margin-left: 4px; vertical-align: 2px; }
.tools { flex: 1; display: flex; flex-direction: column; }
.tabs { height: 26px; display: flex; font-size: 11px; color: #444; }
.rtab { display: block; padding-top: 5px; height: 24px; }
.rtab.active { width: 57px; text-align: center; color: #0a96d8; font-weight: 500; border-bottom: 3px solid #0a96d8; }
.surface { margin-left: 33px; }
.sheet { margin-left: 47px; letter-spacing: -.3px; }
.toolstab { margin-left: 45px; }
.groups { display: flex; height: 54px; }
.group { display: flex; flex-direction: column; align-items: center; border-right: 2px solid #dedede; height: 52px; }
.icons { display: flex; height: 42px; }
.ic { width: 32px; height: 34px; }
.ic.sel { width: 38px; height: 38px; margin-top: -2px; }
.glabel { font-size: 10.500px; color: #444; white-space: nowrap; line-height: 12px; }
.l-create { margin-right: 4px; }
.l-modify { margin-right: 5px; }
.l-assemble { margin-right: 3px; }
.l-construct { margin-right: 2px; }
.l-inspect { margin-right: 2px; }
.l-insert { margin-left: 2px; }
.g-create { width: 257px; padding-right: 9px; }
.g-create .icons { gap: 11px; }
.g-modify { width: 268px; padding-left: 13px; padding-right: 9px; }
.g-modify .icons { gap: 11px; }
.g-assemble { width: 98px; padding-left: 11px; padding-right: 9px; }
.g-assemble .icons { gap: 13px; }
.g-construct { width: 100px; }
.g-inspect { width: 80px; }
.g-insert { width: 66px; }
.g-select { width: 76px; border-right: 0; }

/* canvas */
.canvas { flex: 1; position: relative; overflow: hidden; min-height: 0; }
.scene { display: block; width: 100%; height: 100%; }
.vc-face { font: bold 10px "Liberation Sans", sans-serif; fill: #8f8f8f; letter-spacing: .5px; }
.vc-top { font: 8px "Liberation Sans", sans-serif; fill: #aaa; }
.vc-z { font: bold 15px "Liberation Sans", sans-serif; fill: #5858e0; }
.vc-y { font: bold 12px "Liberation Sans", sans-serif; fill: #8fe08f; }
.vc-x { font: bold 12px "Liberation Sans", sans-serif; fill: #f08080; }

.panel { position: absolute; left: 4px; width: 300px; height: 25px; background: #f0f0f0; border: 1px solid #c8c8c8; display: flex; align-items: center; padding: 0 2px 0 24px; font-size: 11px; color: #555; }
.browser { top: 5px; }
.comments { bottom: 4px; }
.collapse { position: absolute; left: 5px; top: 8px; }
.ptitle { flex: 1; letter-spacing: .1px; }
.pbtn { width: 9px; height: 9px; border-radius: 50%; background: #222; color: #fff; font: bold 9px/8px "Liberation Sans", sans-serif; text-align: center; margin-right: 6px; }
.grip { width: 3px; height: 14px; border-left: 1px solid #888; border-right: 1px solid #bbb; }

.tree { position: absolute; left: 0; top: 35px; display: flex; flex-direction: column; gap: 4px; font-size: 11px; color: #333; }
.row { height: 20px; display: flex; align-items: center; padding-left: 39px; }
.row .tw { margin-right: 7px; }
.row .pill { height: 20px; background: rgba(240, 240, 240, .92); display: flex; align-items: center; padding: 0 9px 0 3px; }
.row .pill .eye { margin-right: 9px; }
.row .pill .gear, .row .pill .folder { margin-right: 6px; }
.row .pill .label { margin-left: 8px; }
.row .pill .doc-label { letter-spacing: -.2px; }
.row .pill .eye + .folder { margin-right: 0; }
.row .pill .eye + .folder + .label { margin-left: 14px; }
.row-root { padding-left: 20px; }
.row-root .tw { margin-right: 8px; }
.row-root .pill { padding: 0 4px 0 3px; gap: 0; }
.row-root .pill .eye { margin-right: 6px; }
.rootname { width: 98px; height: 16px; background: #8c8c8c; color: #fff; font-weight: 700; display: flex; align-items: center; padding-left: 3px; margin-right: 4px; }
.rootname span { margin-left: 13px; }

.navbar { position: absolute; left: 432px; bottom: 4px; height: 24px; width: 236px; background: #f0f0f0; display: flex; align-items: center; padding-left: 1px; }
.ncaret { margin-left: 3px; }
.nsp { margin-left: 6px; }
.nsp2 { margin-left: 10px; }
.nsp3 { margin-left: 6px; }

/* timeline */
.timeline { height: 51px; background: #f0f0f0; border-top: 3px solid #c8c8c8; display: flex; align-items: center; position: relative; }
.playback { display: flex; align-items: center; gap: 12.500px; margin-left: 11px; width: 136px; }
.history { width: 176px; margin-top: -2px; }
.steps { display: flex; gap: 8px; }
.step { width: 16px; height: 18px; }
.bracket { height: 8px; margin: 1px 0 0 7px; width: 168px; border-bottom: 2px solid #c8c8c8; display: flex; }
.bracket i { width: 24px; height: 6px; border-left: 2px solid #c8c8c8; }
.marker { margin-left: 5px; }
.tlgear { margin-left: auto; margin-right: 11px; }
```
